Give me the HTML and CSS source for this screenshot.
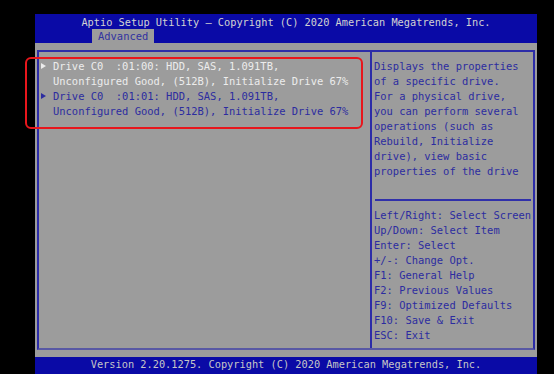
FILE: index.html
```html
<!DOCTYPE html>
<html>
<head>
<meta charset="utf-8">
<link rel="stylesheet" href="styles.css">
</head>
<body>
<div class="screen">
  <div class="header">
    <div class="title">Aptio Setup Utility – Copyright (C) 2020 American Megatrends, Inc.</div>
    <div class="tabs"><span class="tab">Advanced</span></div>
  </div>
  <div class="body">
    <div class="frame">
      <div class="left">
        <div class="item sel">
          <span class="arrow"></span>
          <div class="itext">Drive C0&nbsp;&nbsp;:01:00: HDD, SAS, 1.091TB,<br>Unconfigured Good, (512B), Initialize Drive 67%</div>
        </div>
        <div class="item">
          <span class="arrow"></span>
          <div class="itext">Drive C0&nbsp;&nbsp;:01:01: HDD, SAS, 1.091TB,<br>Unconfigured Good, (512B), Initialize Drive 67%</div>
        </div>
      </div>
      <div class="right">
        <div class="help">Displays the properties<br>of a specific drive.<br>For a physical drive,<br>you can perform several<br>operations (such as<br>Rebuild, Initialize<br>drive), view basic<br>properties of the drive</div>
        <div class="sep"></div>
        <div class="keys">Left/Right: Select Screen<br>Up/Down: Select Item<br>Enter: Select<br>+/-: Change Opt.<br>F1: General Help<br>F2: Previous Values<br>F9: Optimized Defaults<br>F10: Save &amp; Exit<br>ESC: Exit</div>
      </div>
    </div>
  </div>
  <div class="footer">Version 2.20.1275. Copyright (C) 2020 American Megatrends, Inc.</div>
  <div class="mark"></div>
</div>
</body>
</html>
```
FILE: styles.css
```css
html, body {
  margin: 0;
  padding: 0;
  background: #000;
  width: 554px;
  height: 374px;
  overflow: hidden;
}
.screen {
  position: relative;
  margin: 14px 0 0 35px;
  width: 502px;
  height: 360px;
  display: flex;
  flex-direction: column;
  font-family: "DejaVu Sans Mono", "Liberation Mono", monospace;
  font-size: 10.45px;
  line-height: 15px;
  white-space: nowrap;
}
.header {
  background: #0a0aa6;
  height: 29px;
  display: flex;
  flex-direction: column;
}
.title {
  color: #d2d2d2;
  text-align: center;
  height: 15px;
  line-height: 16px;
  font-size: 10.3px;
}
.tabs {
  padding-left: 57px;
  height: 14px;
}
.tab {
  display: inline-block;
  background: #9c9c9c;
  color: #3232a0;
  height: 14px;
  line-height: 14px;
  padding: 0 6px;
  width: 50px;
}
.body {
  background: #9c9c9c;
  flex: 1;
  padding: 7px 2px 7px 2px;
  display: flex;
}
.frame {
  flex: 1;
  display: grid;
  grid-template-columns: 333px 1fr;
  border: 2px solid #2c2ca8;
  border-bottom-color: #5858a4;
}
.left {
  border-right: 2px solid #2c2ca8;
  padding: 7px 0 0 2px;
  color: #2c2ca0;
}
.item {
  display: flex;
  align-items: flex-start;
}
.item.sel {
  color: #ececec;
}
.arrow {
  width: 0;
  height: 0;
  margin: 4px 7px 0 0;
  border-left: 5px solid currentColor;
  border-top: 3.5px solid transparent;
  border-bottom: 3.5px solid transparent;
}
.right {
  padding: 7px 2px 0 2px;
  color: #2c2ca0;
  display: flex;
  flex-direction: column;
}
.sep {
  height: 2px;
  background: #3030aa;
  margin: 20px 0 7px 1px;
}
.footer {
  background: #0a0aa6;
  color: #c6c6c6;
  height: 17px;
  line-height: 15px;
  text-align: center;
  font-size: 10.3px;
}
.mark {
  position: absolute;
  left: -10px;
  top: 43px;
  width: 334px;
  height: 68px;
  border: 2.5px solid #e8161c;
  border-radius: 6px;
}
```
